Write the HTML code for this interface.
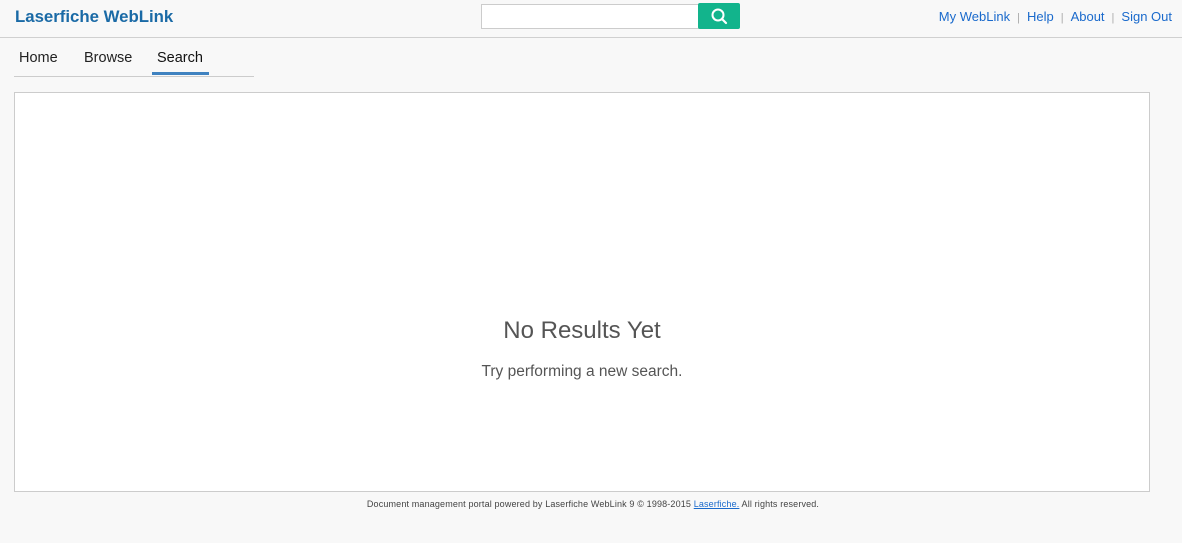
<!DOCTYPE html>
<html><head><style>
body{margin:0;width:1182px;height:543px;background:#f8f8f8;font-family:"Liberation Sans",sans-serif;position:relative;overflow:hidden}
.hdr{position:absolute;left:0;top:0;width:1182px;height:37px;border-bottom:1px solid #d0d0d0}
.logo{position:absolute;left:15px;top:7px;font-size:16.8px;font-weight:bold;color:#1a6aa6}
.sbox{position:absolute;left:481px;top:4px;width:216px;height:23px;background:#fff;border:1px solid #ccc}
.sbtn{position:absolute;left:698px;top:3px;width:42px;height:26px;background:#12b48c;border-radius:2px}
.links{position:absolute;right:10px;top:9px;font-size:13px;color:#1a6acc}
.links span.sep{color:#aaa;margin:0 7px;font-size:11px}
.tabs{position:absolute;left:14px;top:38px;width:240px;height:38px;border-bottom:1px solid #ccc}
.tab{position:absolute;top:12px;font-size:14.5px;color:#222}
.ul{position:absolute;left:152px;top:72px;width:57px;height:3px;background:#3f82c0}
.panel{position:absolute;left:14px;top:92px;width:1134px;height:398px;background:#fff;border:1px solid #ccc}
.t1{position:absolute;left:0;width:1164px;top:317px;text-align:center;font-size:24px;color:#555}
.t2{position:absolute;left:0;width:1164px;top:363px;text-align:center;font-size:15.5px;color:#555}
.ft{position:absolute;left:0;width:1186px;top:499px;text-align:center;font-size:9px;color:#444;letter-spacing:0.15px}
.ft a{color:#1a6acc;text-decoration:underline}
</style></head><body>
<div class="hdr">
<div class="logo">Laserfiche WebLink</div>
<div class="sbox"></div>
<div class="sbtn"><svg width="42" height="26"><circle cx="20" cy="12" r="5.5" fill="none" stroke="#fff" stroke-width="2"/><line x1="24" y1="16" x2="28" y2="20" stroke="#fff" stroke-width="2.2" stroke-linecap="round"/></svg></div>
<div class="links">My WebLink<span class="sep">|</span>Help<span class="sep">|</span>About<span class="sep">|</span>Sign Out</div>
</div>
<div class="tabs">
<div class="tab" style="left:5px">Home</div>
<div class="tab" style="left:70px">Browse</div>
<div class="tab" style="left:143px;color:#111">Search</div>
</div>
<div class="ul"></div>
<div class="panel"></div>
<div class="t1">No Results Yet</div>
<div class="t2">Try performing a new search.</div>
<div class="ft">Document management portal powered by Laserfiche WebLink 9 © 1998-2015 <a>Laserfiche.</a> All rights reserved.</div>
</body></html>
